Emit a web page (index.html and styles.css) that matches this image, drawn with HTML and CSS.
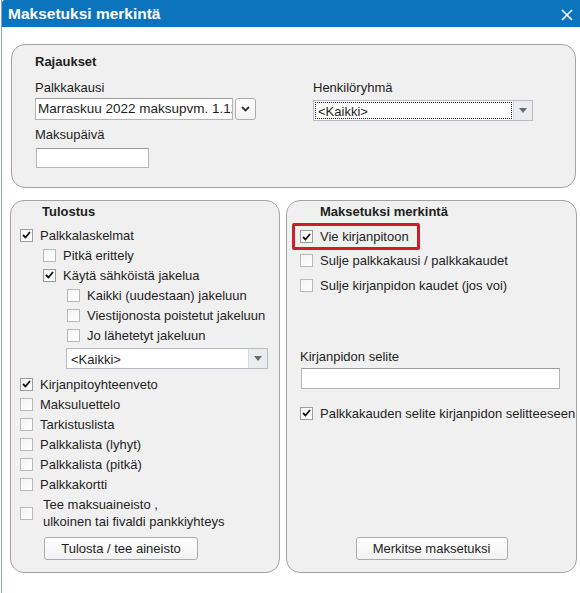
FILE: index.html
```html
<!DOCTYPE html>
<html>
<head>
    <title>Maksetuksi merkintä</title>
    <link rel="stylesheet" href="styles.css">
</head>
<body>
<div class="window">
    <div class="titlebar">
        <span class="title">Maksetuksi merkintä</span>
        <svg class="close" width="12" height="12" viewBox="0 0 12 12"><path d="M1 1L11 11M11 1L1 11" stroke="#fff" stroke-width="1.7" fill="none"/></svg>
    </div>

    <div class="panel top-panel">
        <div class="col">
            <div class="heading">Rajaukset</div>
            <div class="label first">Palkkakausi</div>
            <div class="combo">
                <div class="field period">Marraskuu 2022 maksupvm. 1.12.2022</div>
                <div class="drop-btn">
                    <svg width="9" height="6" viewBox="0 0 9 6"><path d="M1 1L4.5 4.5L8 1" stroke="#333" stroke-width="1.8" fill="none"/></svg>
                </div>
            </div>
            <div class="label">Maksupäivä</div>
            <div class="field date"></div>
        </div>
        <div class="col right-col">
            <div class="label first">Henkilöryhmä</div>
            <div class="select group-select">
                <div class="select-text focused">&lt;Kaikki&gt;</div>
                <div class="select-arrow">
                    <svg width="8" height="5" viewBox="0 0 8 5"><path d="M0 0H8L4 5Z" fill="#6b6b6b"/></svg>
                </div>
            </div>
        </div>
    </div>

    <div class="columns">
        <div class="panel print-panel">
            <div class="heading print-heading">Tulostus</div>
            <div class="row gap-top"><span class="cb checked"><svg width="9" height="8" viewBox="0 0 9 8"><path d="M1 4L3.5 6.5L8 1" stroke="#111" stroke-width="1.8" fill="none"/></svg></span>Palkkalaskelmat</div>
            <div class="row l1"><span class="cb"></span>Pitkä erittely</div>
            <div class="row l1"><span class="cb checked"><svg width="9" height="8" viewBox="0 0 9 8"><path d="M1 4L3.5 6.5L8 1" stroke="#111" stroke-width="1.8" fill="none"/></svg></span>Käytä sähköistä jakelua</div>
            <div class="row l2"><span class="cb"></span>Kaikki (uudestaan) jakeluun</div>
            <div class="row l2"><span class="cb"></span>Viestijonosta poistetut jakeluun</div>
            <div class="row l2"><span class="cb"></span>Jo lähetetyt jakeluun</div>
            <div class="select channel-select">
                <div class="select-text">&lt;Kaikki&gt;</div>
                <div class="select-arrow">
                    <svg width="8" height="5" viewBox="0 0 8 5"><path d="M0 0H8L4 5Z" fill="#6b6b6b"/></svg>
                </div>
            </div>
            <div class="row after-select"><span class="cb checked"><svg width="9" height="8" viewBox="0 0 9 8"><path d="M1 4L3.5 6.5L8 1" stroke="#111" stroke-width="1.8" fill="none"/></svg></span>Kirjanpitoyhteenveto</div>
            <div class="row"><span class="cb"></span>Maksuluettelo</div>
            <div class="row"><span class="cb"></span>Tarkistuslista</div>
            <div class="row"><span class="cb"></span>Palkkalista (lyhyt)</div>
            <div class="row"><span class="cb"></span>Palkkalista (pitkä)</div>
            <div class="row"><span class="cb"></span>Palkkakortti</div>
            <div class="row two-line"><span class="cb"></span><span class="two-line-text">Tee maksuaineisto ,<br>ulkoinen tai fivaldi pankkiyhteys</span></div>
            <button class="btn print-btn">Tulosta / tee aineisto</button>
        </div>

        <div class="panel mark-panel">
            <div class="heading mark-heading">Maksetuksi merkintä</div>
            <div class="row highlight"><span class="cb checked"><svg width="9" height="8" viewBox="0 0 9 8"><path d="M1 4L3.5 6.5L8 1" stroke="#111" stroke-width="1.8" fill="none"/></svg></span>Vie kirjanpitoon</div>
            <div class="row"><span class="cb"></span>Sulje palkkakausi / palkkakaudet</div>
            <div class="row close-books"><span class="cb"></span>Sulje kirjanpidon kaudet (jos voi)</div>
            <div class="label memo-label">Kirjanpidon selite</div>
            <div class="field memo"></div>
            <div class="row memo-check"><span class="cb checked"><svg width="9" height="8" viewBox="0 0 9 8"><path d="M1 4L3.5 6.5L8 1" stroke="#111" stroke-width="1.8" fill="none"/></svg></span>Palkkakauden selite kirjanpidon selitteeseen</div>
            <button class="btn mark-btn">Merkitse maksetuksi</button>
        </div>
    </div>
</div>
</body>
</html>
```

FILE: styles.css
```css
html, body {
    margin: 0;
    padding: 0;
    background: #fff;
    overflow: hidden;
}
body {
    font-family: "Liberation Sans", Arial, sans-serif;
    font-size: 13px;
    color: #1e1e1e;
}
.window {
    margin-left: 1px;
    border-left: 1px solid #8aa3c2;
    height: 593px;
    box-sizing: border-box;
}
.titlebar {
    height: 27px;
    background: #0c74bd;
    border-top-left-radius: 3px;
    display: flex;
    align-items: center;
    justify-content: space-between;
    padding: 0 7px 0 6px;
}
.title {
    color: #fff;
    font-weight: bold;
    font-size: 15.5px;
    padding-top: 1px;
}
.close {
    margin-top: 2px;
}
.panel {
    background: #f0f0f0;
    border: 1px solid #a3a3a3;
    border-radius: 14px;
    box-sizing: border-box;
}
.top-panel {
    margin: 17px 4px 0 9px;
    height: 144px;
    padding: 9px 0 0 23px;
    display: grid;
    grid-template-columns: 278px 1fr;
}
.heading {
    font-weight: bold;
    line-height: 16px;
    height: 16px;
}
.label {
    line-height: 16px;
    height: 16px;
    margin-top: 7px;
}
.label.first {
    margin-top: 10px;
}
.right-col {
    padding-top: 16px;
}
.combo {
    display: flex;
    margin-top: 2px;
}
.field {
    background: #fff;
    border: 1px solid #b4b4b4;
    border-top-color: #9a9a9a;
    box-sizing: border-box;
}
.period {
    width: 198px;
    height: 22px;
    line-height: 20px;
    padding-left: 2px;
    white-space: nowrap;
    overflow: hidden;
    font-size: 13.5px;
}
.drop-btn {
    width: 21px;
    height: 22px;
    margin-left: 2px;
    box-sizing: border-box;
    border: 1px solid #aeaeae;
    border-radius: 3px;
    background: linear-gradient(#fff, #f2f2f2);
    display: flex;
    align-items: center;
    justify-content: center;
}
.date {
    width: 113px;
    height: 20px;
    margin-top: 5px;
    margin-left: 1px;
}
.select {
    display: flex;
    background: #fff;
    border: 1px solid #b8bcc2;
    box-sizing: border-box;
    height: 21px;
}
.select-text {
    flex: 1;
    line-height: 17px;
    padding-left: 2px;
    margin: 1px;
    border: 1px solid transparent;
}
.select-text.focused {
    border: 1px dotted #222;
}
.select-arrow {
    width: 18px;
    background: #e9ecf0;
    border-left: 1px solid #d6dae0;
    display: flex;
    align-items: center;
    justify-content: center;
}
.group-select {
    width: 220px;
    margin-top: 4px;
}
.columns {
    display: grid;
    grid-template-columns: 270px 291px;
    gap: 6px;
    margin: 12px 0 0 8px;
}
.print-panel, .mark-panel {
    height: 373px;
    display: flex;
    flex-direction: column;
    padding: 3px 9px 12px 9px;
}
.print-heading {
    margin-left: 22px;
}
.row {
    display: flex;
    align-items: center;
    height: 20px;
    white-space: nowrap;
}
.gap-top {
    margin-top: 5px;
}
.cb {
    width: 13px;
    height: 13px;
    box-sizing: border-box;
    border: 1px solid #b9b9b9;
    background: linear-gradient(135deg, #f4f4f4, #fff);
    margin-right: 7px;
    flex: none;
    display: flex;
    align-items: center;
    justify-content: center;
}
.cb.checked {
    border-color: #9c9c9c;
}
.l1 {
    padding-left: 23px;
}
.l2 {
    padding-left: 47px;
}
.channel-select {
    width: 202px;
    margin: 3px 0 0 46px;
    flex: none;
}
.after-select {
    margin-top: 5px;
}
.two-line {
    height: auto;
    margin-top: 2px;
}
.two-line-text {
    line-height: 17px;
    margin-left: 3px;
}
.btn {
    font-family: inherit;
    font-size: 13px;
    color: #1e1e1e;
    background: linear-gradient(#fff, #f1f1f1);
    border: 1px solid #acacac;
    border-radius: 3px;
    height: 23px;
    padding: 0;
}
.print-btn {
    width: 154px;
    margin: 7px 0 0 24px;
    align-self: flex-start;
}
.mark-panel {
    padding-left: 13px;
}
.mark-heading {
    margin-left: 20px;
}
.highlight {
    margin: 3px 0 0 -8px;
    width: 128px;
    height: 27px;
    box-sizing: border-box;
    border: 3px solid #c9202b;
    border-radius: 2px;
    padding-left: 5px;
}
.close-books {
    margin-top: 5px;
}
.memo-label {
    margin-top: 54px;
}
.memo {
    width: 259px;
    height: 21px;
    margin: 3px 0 0 1px;
}
.memo-check {
    margin-top: 14px;
}
.mark-btn {
    width: 152px;
    margin-top: auto;
    align-self: center;
    margin-left: -4px;
}
```
